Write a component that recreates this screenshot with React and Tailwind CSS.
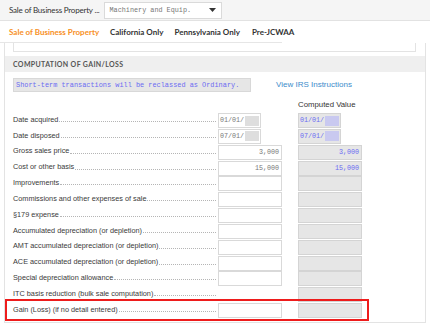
import React from "react";

const rows = [
  { label: "Date acquired", input: "date", val: "01/01/", comp: "01/01/" },
  { label: "Date disposed", input: "date", val: "07/01/", comp: "07/01/" },
  { label: "Gross sales price", input: "num", val: "3,000", comp: "3,000" },
  { label: "Cost or other basis", input: "num", val: "15,000", comp: "15,000" },
  { label: "Improvements", input: "num", val: "", comp: "" },
  { label: "Commissions and other expenses of sale", input: "num", val: "", comp: "" },
  { label: "§179 expense", input: "num", val: "", comp: "" },
  { label: "Accumulated depreciation (or depletion)", input: "num", val: "", comp: "" },
  { label: "AMT accumulated depreciation (or depletion)", input: "num", val: "", comp: "" },
  { label: "ACE accumulated depreciation (or depletion)", input: "num", val: "", comp: "" },
  { label: "Special depreciation allowance", input: "num", val: "", comp: "" },
  { label: "ITC basis reduction (bulk sale computation)", input: "none", val: "", comp: "" },
  { label: "Gain (Loss) (if no detail entered)", input: "num", val: "", comp: "", hl: true },
];

function Row({ r }) {
  return (
    <div className="relative flex items-center h-[15px]">
      <div className="w-[205px] flex items-end h-full pb-[5px]">
        <span className="text-[7.3px] leading-none text-[#3a3a3a] whitespace-nowrap">{r.label}</span>
        <span className="flex-1 border-b border-dotted border-[#b5b5b5] mb-[1px] ml-[1px] mr-[2px]" />
      </div>
      <div className="w-[80px] h-full">
        {r.input === "date" && (
          <div className="w-[43px] h-full bg-white border border-[#d9d9d9] flex items-center pl-[1px] font-['Liberation_Mono'] text-[6.7px] text-[#777]">
            <span>{r.val}</span>
            <span className="ml-[1px] w-[14px] h-[10px] bg-[#dedede]" />
          </div>
        )}
        {r.input === "num" && (
          <div className="w-[64px] h-full bg-white border border-[#d9d9d9] flex items-center justify-end pr-[2px] font-['Liberation_Mono'] text-[6.7px] text-[#777]">
            {r.val}
          </div>
        )}
      </div>
      <div className="h-full">
        {r.input === "date" ? (
          <div className="w-[43px] h-full bg-[#e6e6e6] border border-[#d4d4d4] flex items-center pl-[1px] font-['Liberation_Mono'] text-[6.7px] text-[#6b6bf2]">
            <span>{r.comp}</span>
            <span className="ml-[1px] w-[14px] h-[10px] bg-[#c9c9f0]" />
          </div>
        ) : (
          <div className="w-[64px] h-full bg-[#e6e6e6] border border-[#d4d4d4] flex items-center justify-end pr-[2px] font-['Liberation_Mono'] text-[6.7px] text-[#6b6bf2]">
            {r.comp}
          </div>
        )}
      </div>
      {r.hl && (
        <div className="absolute left-[-8px] top-[-4px] w-[364px] h-[22px] border-2 border-[#ee1c1c] pointer-events-none" />
      )}
    </div>
  );
}

export default function App() {
  return (
    <div className="w-[430px] h-[325px] bg-white overflow-hidden font-['Lato',sans-serif] text-[#333]">
      {/* top bar */}
      <div className="h-[21px] bg-[#f5f5f5] border-b border-[#e2e2e2] flex items-center pl-[9px]">
        <span className="text-[8px] tracking-[-0.2px] text-[#333] whitespace-nowrap">Sale of Business Property ...</span>
        <div className="ml-[4px] w-[118px] h-[17px] bg-white border border-[#dadada] flex items-center justify-between pl-[5px] pr-[5px]">
          <span className="font-['Liberation_Mono'] text-[6.8px] text-[#777]">Machinery and Equip.</span>
          <svg width="7" height="4" viewBox="0 0 7 4"><path d="M0 0h7L3.5 4z" fill="#333" /></svg>
        </div>
      </div>
      {/* tabs */}
      <div className="h-[22px] w-[282px] border-b border-[#e6e6e6] flex items-center text-[8px] font-bold whitespace-nowrap">
        <div className="pl-[9px] w-[99px] text-[#f7901e]">Sale of Business Property</div>
        <div className="w-px h-[10px] bg-[#e3e3e3]" />
        <div className="pl-[11px] w-[73px]">California Only</div>
        <div className="w-px h-[10px] bg-[#e3e3e3]" />
        <div className="pl-[11px] w-[86px]">Pennsylvania Only</div>
        <div className="w-px h-[10px] bg-[#f3dede]" />
        <div className="pl-[12px]">Pre-JCWAA</div>
      </div>
      {/* panel */}
      <div className="mx-[4px] h-[280px] border-l border-r border-b border-[#e3e3e3]">
        <div className="ml-[8px] mr-[9px] h-[9px] border-l border-r border-b border-[#e3e3e3]" />
        <div className="mt-[4px] h-[16px] bg-[#efefef] flex items-center pl-[8px]">
          <span className="text-[7px] font-bold tracking-[0.35px] text-[#555]">COMPUTATION OF GAIN/LOSS</span>
        </div>
        <div className="pl-[8px]">
          <div className="mt-[6px] flex items-center h-[14px]">
            <div className="w-[238px] h-full bg-[#e6e6e6] border border-[#d8d8d8] flex items-center pl-[2px] font-['Liberation_Mono'] text-[6.9px] text-[#6b6bf2] whitespace-nowrap">
              Short-term transactions will be reclassed as Ordinary.
            </div>
            <span className="ml-[25px] font-['Liberation_Sans'] text-[8px] text-[#3d8ccb]">View IRS Instructions</span>
          </div>
          <div className="mt-[5px] h-[15px] flex items-center pl-[285px] font-['Liberation_Sans'] text-[7.8px] text-[#333]">
            Computed Value
          </div>
          <div className="mt-[1px] flex flex-col gap-[0.85px] font-['Liberation_Sans']">
            {rows.map((r, i) => (
              <Row key={i} r={r} />
            ))}
          </div>
        </div>
      </div>
    </div>
  );
}
